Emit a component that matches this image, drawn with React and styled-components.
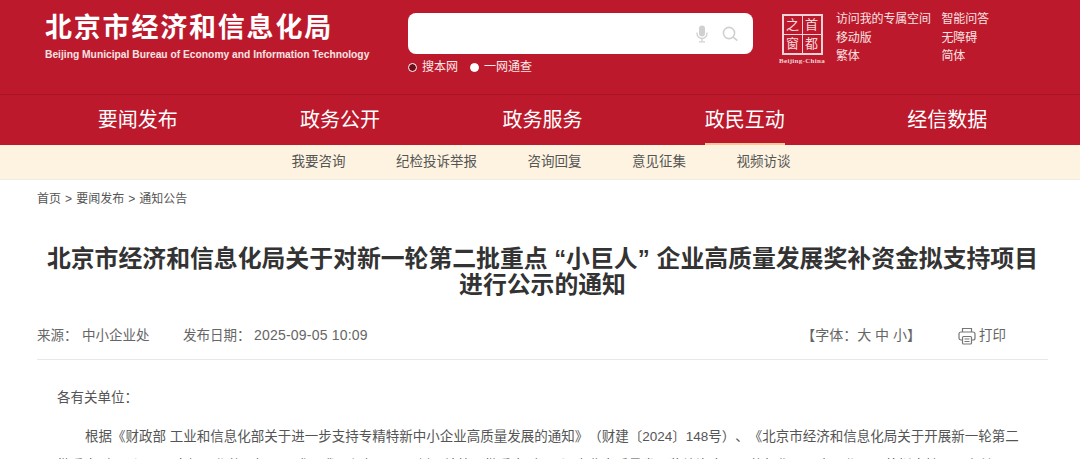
import React from 'react';
import styled, { createGlobalStyle } from 'styled-components';

const FONT = '"Liberation Sans", "Noto Sans CJK SC", sans-serif';
const RED = '#bc1a2c';

const GlobalStyle = createGlobalStyle`
  html, body {
    margin: 0;
    padding: 0;
    height: 459px;
    overflow: hidden;
    background: #fff;
    font-family: ${FONT};
    text-spacing-trim: space-all;
  }
`;

// header
const Header = styled.header`
  height: 94px;
  background: ${RED};
  display: flex;
  box-sizing: border-box;
  padding: 11px 0 0 45px;
`;

const Brand = styled.div`
  width: 363px;
  color: #fff;
`;

const BrandTitle = styled.h1`
  margin: 1px 0 0;
  font-size: 27px;
  line-height: 32px;
  font-weight: 700;
  letter-spacing: 1.8px;
  white-space: nowrap;
`;

const BrandSub = styled.div`
  margin-top: 4px;
  font-size: 10.27px;
  line-height: 14px;
  font-weight: 700;
  white-space: nowrap;
  color: #fbe3e3;
`;

const SearchArea = styled.div`
  width: 345px;
  padding-top: 2px;
`;

const SearchBox = styled.div`
  height: 41px;
  background: #fff;
  border-radius: 8px;
  display: flex;
  align-items: center;
  justify-content: flex-end;
  gap: 14px;
  padding-right: 15px;
`;

const RadioRow = styled.div`
  display: flex;
  margin-top: 5px;
  gap: 12px;
  color: #fde9e9;
  font-size: 12px;
  line-height: 17px;
`;

const RadioItem = styled.label`
  display: flex;
  align-items: center;
  gap: 5px;
`;

const RadioDot = styled.span`
  width: 9px;
  height: 9px;
  border-radius: 50%;
  box-sizing: border-box;
  background: ${p => (p.$on ? '#fff' : '#6e0c1a')};
  border: 1.5px solid #fff;
`;

const Seal = styled.div`
  width: 54px;
  margin-left: 22px;
  margin-top: 3px;
  display: flex;
  flex-direction: column;
  align-items: center;
`;

const SealFrame = styled.div`
  width: 41px;
  height: 41px;
  box-sizing: border-box;
  border: 2.5px solid #f3d3d5;
  display: grid;
  grid-template-columns: 1fr 1fr;
  grid-template-rows: 1fr 1fr;
  gap: 1px;
  background: #f3d3d5;
`;

const SealCell = styled.span`
  background: ${RED};
  color: #f7dcdc;
  font-family: "Liberation Serif", "Noto Sans CJK SC", serif;
  font-size: 13px;
  line-height: 18px;
  text-align: center;
  overflow: hidden;
`;

const SealText = styled.div`
  margin-top: 2px;
  font-family: "Liberation Serif", serif;
  font-size: 7px;
  line-height: 8px;
  font-weight: 700;
  letter-spacing: 0.3px;
  color: #f3d3d5;
  white-space: nowrap;
`;

const QuickLinks = styled.div`
  margin-left: 7px;
  margin-top: -1px;
  display: grid;
  grid-template-columns: 105.5px auto;
  grid-auto-rows: 18.5px;
  align-content: start;
  color: #fbe3e3;
  font-size: 12px;
  line-height: 18.5px;
  letter-spacing: -0.15px;
  white-space: nowrap;
`;

// nav
const MainNav = styled.nav`
  height: 51px;
  box-sizing: border-box;
  background: ${RED};
  border-top: 1px solid #a81526;
  padding-left: 36.5px;
  display: grid;
  grid-template-columns: repeat(5, 202.4px);
`;

const NavItem = styled.div`
  display: flex;
  justify-content: center;
`;

const NavLabel = styled.span`
  height: 50px;
  box-sizing: border-box;
  color: #fff;
  font-size: 20px;
  line-height: 50px;
  border-bottom: 2px solid ${p => (p.$active ? '#f7c99a' : 'transparent')};
`;

const SubNav = styled.div`
  height: 35px;
  box-sizing: border-box;
  background: #fdf3e0;
  border-bottom: 1px solid #f3ece0;
  display: flex;
  justify-content: center;
  gap: 50.5px;
  padding-left: 2px;
  color: #555;
  font-size: 13.5px;
  line-height: 34px;
`;

// article
const Page = styled.main`
  padding: 0 32px 0 37px;
`;

const Crumbs = styled.div`
  margin-top: 10px;
  color: #555;
  font-size: 12px;
  line-height: 18px;
  word-spacing: 0.75px;
`;

const Title = styled.h2`
  margin: 38px 0 0;
  color: #333;
  font-size: 23.85px;
  line-height: 26px;
  font-weight: 700;
  text-align: center;
`;

const Quote = styled.span`
  display: inline-block;
  padding: ${p => (p.$open ? '0 0 0 6.5px' : '0 7px 0 0')};
`;

const Meta = styled.div`
  margin-top: 24px;
  height: 38px;
  box-sizing: border-box;
  border-bottom: 1px solid #e8e8e8;
  display: flex;
  align-items: flex-start;
  color: #666;
  font-size: 13.5px;
  line-height: 27px;
  white-space: nowrap;
`;

const MetaField = styled.span`
  width: ${p => p.$w}px;
`;

const MetaValue = styled.span`
  margin-left: ${p => p.$gap}px;
`;

const MetaDate = styled(MetaValue)`
  font-size: 14px;
  letter-spacing: 0.2px;
`;

const MetaTools = styled.div`
  margin-left: auto;
  display: flex;
  align-items: center;
  gap: 37px;
  padding-right: 42px;
  font-size: 14px;
`;

const Print = styled.span`
  display: flex;
  align-items: center;
  gap: 3px;
  font-size: 13.5px;
`;

const Article = styled.article`
  padding: 23px 20px 0 20px;
  color: #555;
  font-size: 13.5px;
  line-height: 29px;
`;

const Para = styled.p`
  margin: 0 0 10px;
  text-indent: ${p => (p.$indent ? '28px' : '0')};
`;

function MicIcon() {
  return (
    <svg width="12" height="18" viewBox="0 0 12 18" fill="none">
      <rect x="3" y="0.5" width="6" height="11" rx="3" fill="#d0d0d0" />
      <path d="M1 7.5v1a5 5 0 0 0 10 0v-1M6 13.5v2.5M3 16.8h6" stroke="#d0d0d0" strokeWidth="1.3" />
    </svg>
  );
}

function SearchIcon() {
  return (
    <svg width="16" height="16" viewBox="0 0 16 16" fill="none" stroke="#d0d0d0" strokeWidth="1.6">
      <circle cx="7" cy="7" r="5.6" />
      <path d="M11.2 11.2l3.6 3" strokeLinecap="round" />
    </svg>
  );
}

function PrintIcon() {
  return (
    <svg width="18" height="18" viewBox="0 0 18 18" fill="none" stroke="#777" strokeWidth="1.2">
      <path d="M4.5 5V1.5h9V5" />
      <rect x="1" y="5" width="16" height="8" rx="2" />
      <rect x="4.5" y="9.5" width="9" height="7.5" rx="1" fill="#fff" />
      <path d="M6.5 12h5M6.5 14.5h5" />
    </svg>
  );
}

const navItems = ['要闻发布', '政务公开', '政务服务', '政民互动', '经信数据'];
const subItems = ['我要咨询', '纪检投诉举报', '咨询回复', '意见征集', '视频访谈'];
const quick = ['访问我的专属空间', '智能问答', '移动版', '无障碍', '繁体', '简体'];

export default function App() {
  return (
    <>
      <GlobalStyle />
      <Header>
        <Brand>
          <BrandTitle>北京市经济和信息化局</BrandTitle>
          <BrandSub>Beijing Municipal Bureau of Economy and Information Technology</BrandSub>
        </Brand>
        <SearchArea>
          <SearchBox>
            <MicIcon />
            <SearchIcon />
          </SearchBox>
          <RadioRow>
            <RadioItem><RadioDot />搜本网</RadioItem>
            <RadioItem><RadioDot $on />一网通查</RadioItem>
          </RadioRow>
        </SearchArea>
        <Seal>
          <SealFrame>
            <SealCell>之</SealCell>
            <SealCell>首</SealCell>
            <SealCell>窗</SealCell>
            <SealCell>都</SealCell>
          </SealFrame>
          <SealText>Beijing-China</SealText>
        </Seal>
        <QuickLinks>
          {quick.map(q => <span key={q}>{q}</span>)}
        </QuickLinks>
      </Header>
      <MainNav>
        {navItems.map(n => (
          <NavItem key={n}>
            <NavLabel $active={n === '政民互动'}>{n}</NavLabel>
          </NavItem>
        ))}
      </MainNav>
      <SubNav>
        {subItems.map(s => <span key={s}>{s}</span>)}
      </SubNav>
      <Page>
        <Crumbs>首页 &gt; 要闻发布 &gt; 通知公告</Crumbs>
        <Title>北京市经济和信息化局关于对新一轮第二批重点<Quote $open>“</Quote>小巨人<Quote>”</Quote>企业高质量发展奖补资金拟支持项目进行公示的通知</Title>
        <Meta>
          <MetaField $w={146}>来源：<MetaValue $gap={4.5}>中小企业处</MetaValue></MetaField>
          <span>发布日期：<MetaDate $gap={3.5}>2025-09-05 10:09</MetaDate></span>
          <MetaTools>
            <span>【字体：大 中 小】</span>
            <Print><PrintIcon />打印</Print>
          </MetaTools>
        </Meta>
        <Article>
          <Para>各有关单位：</Para>
          <Para $indent>根据《财政部 工业和信息化部关于进一步支持专精特新中小企业高质量发展的通知》（财建〔2024〕148号）、《北京市经济和信息化局关于开展新一轮第二批重点“小巨人”项目申报工作的通知》要求，我局组织开展了新一轮第二批重点“小巨人”企业高质量发展奖补资金项目的征集、评审工作。现将拟支持项目名单</Para>
        </Article>
      </Page>
    </>
  );
}
